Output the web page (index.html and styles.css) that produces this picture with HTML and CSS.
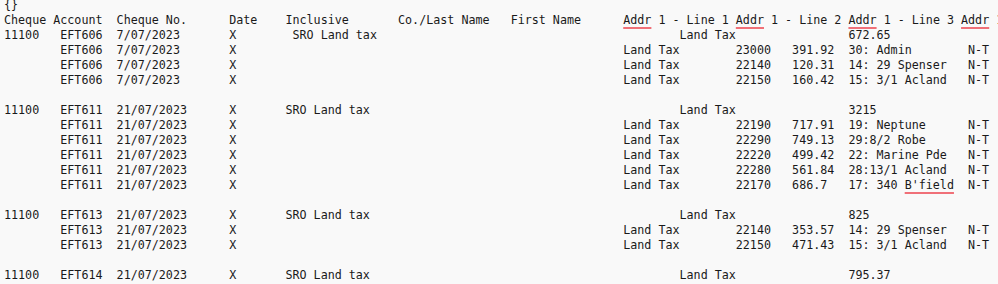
FILE: index.html
```html
<!DOCTYPE html>
<html lang="en">
<head>
<meta charset="utf-8">
<title>Notepad export</title>
<link rel="stylesheet" href="styles.css">
</head>
<body>
<main class="editor">
<pre class="doc">{}
Cheque Account&#9;Cheque No.&#9;Date&#9;Inclusive&#9;Co./Last Name&#9;First Name&#9;<span class="sp">Addr</span> 1 - Line 1 <span class="sp">Addr</span> 1 - Line 2 <span class="sp">Addr</span> 1 - Line 3 <span class="sp">Addr</span> 1 - Line 4 <span class="sp">Addr</span> 1 - Postcode
11100&#9;EFT606&#9;7/07/2023&#9;X&#9; SRO Land tax&#9;&#9;&#9;&#9;&#9;&#9;Land Tax&#9;&#9;672.65
&#9;EFT606&#9;7/07/2023&#9;X&#9;&#9;&#9;&#9;&#9;&#9;&#9;Land Tax&#9;23000&#9;391.92&#9;30: Admin&#9; N-T
&#9;EFT606&#9;7/07/2023&#9;X&#9;&#9;&#9;&#9;&#9;&#9;&#9;Land Tax&#9;22140&#9;120.31&#9;14: 29 Spenser&#9; N-T
&#9;EFT606&#9;7/07/2023&#9;X&#9;&#9;&#9;&#9;&#9;&#9;&#9;Land Tax&#9;22150&#9;160.42&#9;15: 3/1 Acland&#9; N-T

11100&#9;EFT611&#9;21/07/2023&#9;X&#9;SRO Land tax&#9;&#9;&#9;&#9;&#9;&#9;Land Tax&#9;&#9;3215
&#9;EFT611&#9;21/07/2023&#9;X&#9;&#9;&#9;&#9;&#9;&#9;&#9;Land Tax&#9;22190&#9;717.91&#9;19: Neptune&#9; N-T
&#9;EFT611&#9;21/07/2023&#9;X&#9;&#9;&#9;&#9;&#9;&#9;&#9;Land Tax&#9;22290&#9;749.13&#9;29:8/2 Robe&#9; N-T
&#9;EFT611&#9;21/07/2023&#9;X&#9;&#9;&#9;&#9;&#9;&#9;&#9;Land Tax&#9;22220&#9;499.42&#9;22: Marine Pde&#9; N-T
&#9;EFT611&#9;21/07/2023&#9;X&#9;&#9;&#9;&#9;&#9;&#9;&#9;Land Tax&#9;22280&#9;561.84&#9;28:13/1 Acland&#9; N-T
&#9;EFT611&#9;21/07/2023&#9;X&#9;&#9;&#9;&#9;&#9;&#9;&#9;Land Tax&#9;22170&#9;686.7&#9;17: 340 <span class="sp">B'field</span>&#9; N-T

11100&#9;EFT613&#9;21/07/2023&#9;X&#9;SRO Land tax&#9;&#9;&#9;&#9;&#9;&#9;Land Tax&#9;&#9;825
&#9;EFT613&#9;21/07/2023&#9;X&#9;&#9;&#9;&#9;&#9;&#9;&#9;Land Tax&#9;22140&#9;353.57&#9;14: 29 Spenser&#9; N-T
&#9;EFT613&#9;21/07/2023&#9;X&#9;&#9;&#9;&#9;&#9;&#9;&#9;Land Tax&#9;22150&#9;471.43&#9;15: 3/1 Acland&#9; N-T

11100&#9;EFT614&#9;21/07/2023&#9;X&#9;SRO Land tax&#9;&#9;&#9;&#9;&#9;&#9;Land Tax&#9;&#9;795.37
&#9;EFT614&#9;21/07/2023&#9;X&#9;&#9;&#9;&#9;&#9;&#9;&#9;Land Tax&#9;22190&#9;795.37&#9;19: Neptune&#9; N-T
</pre>
</main>
</body>
</html>
```

FILE: styles.css
```css
html, body {
  margin: 0;
  padding: 0;
  background: #f9f9f9;
  overflow: hidden;
  height: 100%;
}

.editor {
  width: 998px;
  height: 284px;
  overflow: hidden;
  background: #f9f9f9;
}

.doc {
  margin: -2px 0 0 0;
  padding: 0 0 0 4px;
  font-family: "DejaVu Sans Mono", "Liberation Mono", monospace;
  font-size: 11.7px;
  line-height: 15px;
  color: #1a1a1a;
  tab-size: 8;
  -moz-tab-size: 8;
  white-space: pre;
}

.sp {
  text-decoration-line: underline;
  text-decoration-style: solid;
  text-decoration-color: #f07078;
  text-decoration-thickness: 2px;
  text-underline-offset: 3px;
}
```
